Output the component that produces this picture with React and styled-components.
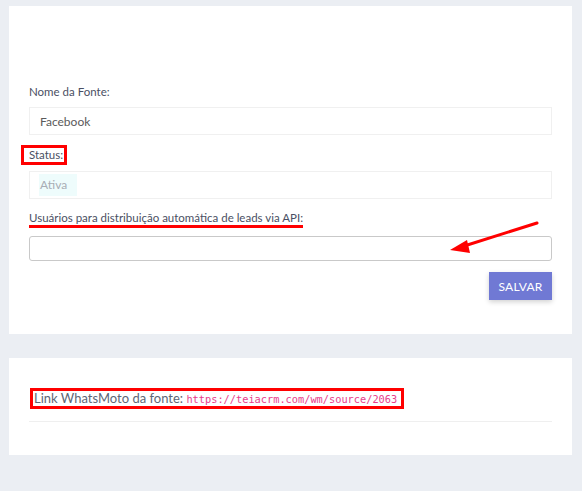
import React from 'react';
import styled, { createGlobalStyle } from 'styled-components';

const Global = createGlobalStyle`
  html, body {
    margin: 0;
    padding: 0;
    background: #ebeef3;
    font-family: Lato, "Open Sans", sans-serif;
  }
`

const Page = styled.div`
  padding: 6px 10px 0 9px;
  display: flex;
  flex-direction: column;
  gap: 24px;
  min-height: 491px;
  box-sizing: border-box;
`

const Card = styled.div`
  position: relative;
  background: #fff;
  padding: ${props => props.top}px 20px ${props => props.bottom}px 20px;
`

const Field = styled.div`
  display: flex;
  flex-direction: column;
  margin-bottom: 11px;
`

const Label = styled.label`
  font-size: 11.5px;
  line-height: 18px;
  height: 18px;
  color: #4a4f63;
  margin-bottom: ${props => props.gap || 6}px;
`

const Input = styled.div`
  height: ${props => props.strong ? 23 : 26}px;
  border: 1px solid ${props => props.strong ? '#c9c9c9' : '#f0f0f0'};
  border-radius: ${props => props.strong ? 3 : 0}px;
  display: flex;
  align-items: center;
  padding: 0 10px;
  font-size: 12px;
  color: #5a5a5a;
`

const Chip = styled.span`
  background: #eefcfc;
  color: #a8adb5;
  padding: 3px 10px 4px 1px;
  margin-left: -1px;
`

const RedBox = styled.span`
  display: inline-block;
  border: 3px solid #f00;
  margin: -1px 0 -1px ${props => props.ml}px;
  padding: 0 ${props => props.pr}px 0 ${props => props.pl}px;
  line-height: 14px;
  vertical-align: top;
`

const RedLine = styled.span`
  display: inline-block;
  border-bottom: 3px solid #f00;
  line-height: 15px;
  vertical-align: top;
`

const Actions = styled.div`
  display: flex;
  justify-content: flex-end;
  margin-top: 8px;
`

const Button = styled.button`
  width: 63px;
  height: 28px;
  border: none;
  background: #7079d4;
  color: #fff;
  font-family: Lato, sans-serif;
  font-size: 12px;
  letter-spacing: 0.2px;
  box-shadow: 0 2px 5px rgba(0, 0, 0, 0.18);
  padding: 0;
`

const LinkRow = styled.div`
  font-size: 13px;
  color: #5d6676;
  padding-bottom: 13px;
  border-bottom: 1px solid #efefef;
`

const Code = styled.code`
  font-family: "DejaVu Sans Mono", "Liberation Mono", monospace;
  font-size: 10.3px;
  color: #e83e8c;
`

const Arrow = styled.svg`
  position: absolute;
  left: 0;
  top: 0;
  pointer-events: none;
`

export default function App() {
  return (
    <>
      <Global />
      <Page>
        <Card top={77} bottom={34}>
          <Field>
            <Label>Nome da Fonte:</Label>
            <Input>Facebook</Input>
          </Field>
          <Field>
            <Label gap={7}>
              <RedBox ml={-8} pl={5} pr={1}>Status:</RedBox>
            </Label>
            <Input><Chip>Ativa</Chip></Input>
          </Field>
          <Field>
            <Label gap={8}>
              <RedLine>Usuários para distribuição automática de leads via API:</RedLine>
            </Label>
            <Input strong />
          </Field>
          <Actions>
            <Button>SALVAR</Button>
          </Actions>
          <Arrow width="563" height="328" viewBox="0 0 563 328">
            <line x1="528" y1="217" x2="452" y2="241" stroke="#f00" strokeWidth="3" strokeLinecap="round" />
            <polygon points="441,244 458,234 461,247" fill="#f00" />
          </Arrow>
        </Card>
        <Card top={31} bottom={33}>
          <LinkRow>
            <RedBox ml={1} pl={1} pr={4}>
              Link WhatsMoto da fonte: <Code>https://teiacrm.com/wm/source/2063</Code>
            </RedBox>
          </LinkRow>
        </Card>
      </Page>
    </>
  );
}
